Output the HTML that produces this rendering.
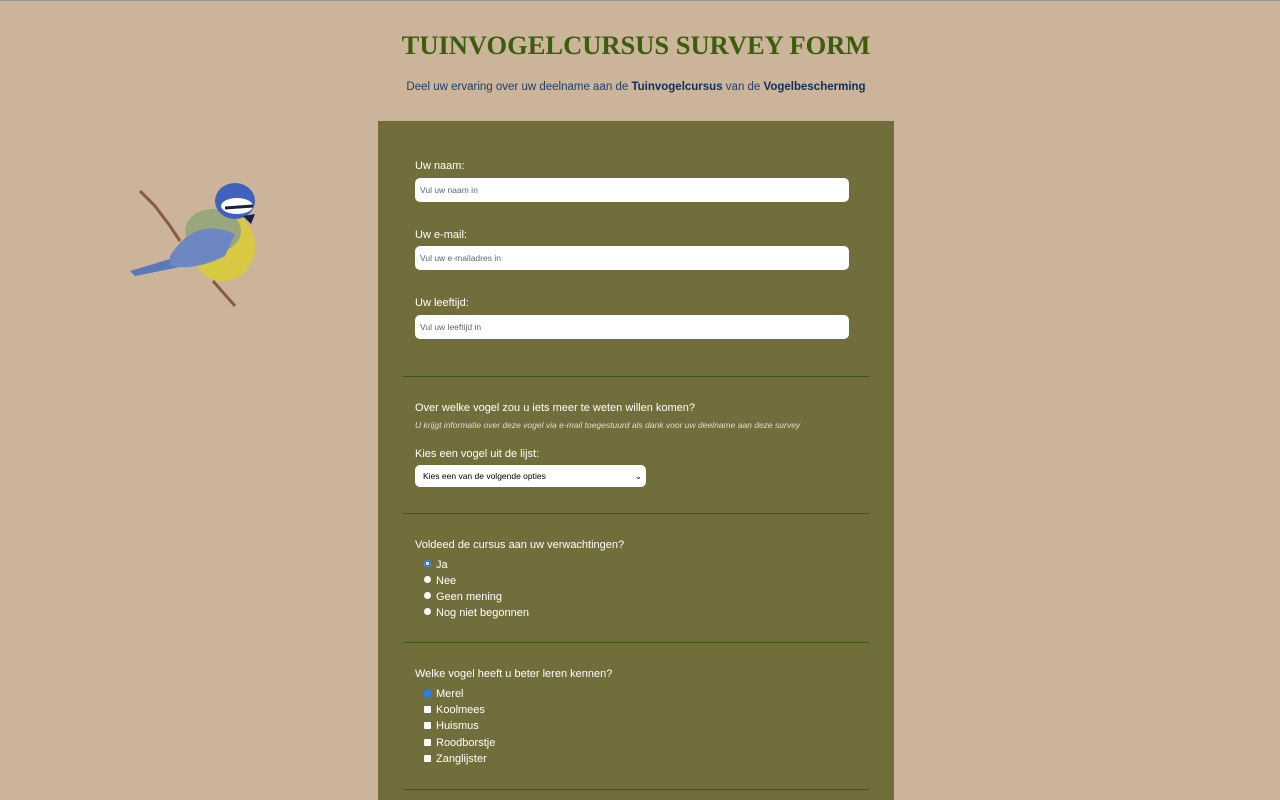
<!DOCTYPE html>
<html><head><meta charset="utf-8"><style>
html,body{margin:0;width:1280px;height:800px;overflow:hidden}
body{background:#cbb499;font-family:"Liberation Sans",sans-serif;position:relative;border-top:1px solid #999;box-sizing:border-box}
.a{position:absolute}
h1{position:absolute;left:0;width:1272px;top:29px;margin:0;text-align:center;font-family:"Liberation Serif",serif;font-weight:bold;font-size:26.5px;color:#3a5e0c}
.sub{left:0;width:1272px;top:80px;text-align:center;font-size:11.5px;color:#1c3f6e}
.sub b{color:#0d2f5e;font-weight:bold}
.panel{left:378px;top:120px;width:516px;height:690px;background:#716e3b}
.lab{font-size:11px;color:#fff}
.inp{left:415px;width:434px;height:24px;background:#fff;border-radius:5px;font-size:8.5px;color:#666;line-height:24px;padding-left:5px;box-sizing:border-box}
.hr{left:403px;width:466px;height:1px;background:#3c5612}
.r{width:7px;height:7px;border-radius:50%;background:#fff;left:424px}
.c{width:7px;height:7px;border-radius:1px;background:#fff;left:424px}
.opt{left:436px;font-size:11px;color:#fff}
</style></head><body>
<h1>TUINVOGELCURSUS SURVEY FORM</h1>
<div class="a sub">Deel uw ervaring over uw deelname aan de <b>Tuinvogelcursus</b> van de <b>Vogelbescherming</b></div>
<svg class="a" style="left:125px;top:175px" width="140" height="140" viewBox="0 0 140 140">
<path d="M15 15 L30 30 L45 50 L55 65" stroke="#8a5a40" stroke-width="3" fill="none"/>
<path d="M88 105 L110 130" stroke="#8a5a40" stroke-width="3" fill="none"/>
<ellipse cx="98" cy="70" rx="32" ry="35" fill="#d8c842"/>
<ellipse cx="88" cy="55" rx="28" ry="22" fill="#9aa77a"/>
<path d="M5 95 L55 80 L60 90 L10 100Z" fill="#5b78b8"/>
<path d="M45 80 Q70 40 110 58 L100 80 Q70 95 45 90Z" fill="#6c87c4"/>
<ellipse cx="110" cy="25" rx="20" ry="18" fill="#3f62c0"/>
<ellipse cx="112" cy="30" rx="16" ry="8" fill="#fff"/>
<path d="M100 32 L128 30" stroke="#1a2040" stroke-width="3"/>
<path d="M118 40 L130 38 L126 48Z" fill="#1a2040"/>
</svg>
<div class="a panel"></div>
<div class="a lab" style="left:415px;top:159px">Uw naam:</div>
<div class="a inp" style="top:177px">Vul uw naam in</div>
<div class="a lab" style="left:415px;top:228px">Uw e-mail:</div>
<div class="a inp" style="top:245px">Vul uw e-mailadres in</div>
<div class="a lab" style="left:415px;top:296px">Uw leeftijd:</div>
<div class="a inp" style="top:314px">Vul uw leeftijd in</div>
<div class="a hr" style="top:375px"></div>
<div class="a lab" style="left:415px;top:401px">Over welke vogel zou u iets meer te weten willen komen?</div>
<div class="a" style="left:415px;top:419px;font-size:8.5px;font-style:italic;color:#ddd">U krijgt informatie over deze vogel via e-mail toegestuurd als dank voor uw deelname aan deze survey</div>
<div class="a lab" style="left:415px;top:447px">Kies een vogel uit de lijst:</div>
<div class="a inp" style="top:464px;width:231px;height:22px;line-height:22px;color:#000;padding-left:8px">Kies een van de volgende opties<span style="position:absolute;right:4px">⌄</span></div>
<div class="a hr" style="top:512px"></div>
<div class="a lab" style="left:415px;top:538px">Voldeed de cursus aan uw verwachtingen?</div>
<div class="a r" style="top:559px;box-shadow:inset 0 0 0 2px #2a7de1"></div><div class="a opt" style="top:558px">Ja</div>
<div class="a r" style="top:575px"></div><div class="a opt" style="top:574px">Nee</div>
<div class="a r" style="top:591px"></div><div class="a opt" style="top:590px">Geen mening</div>
<div class="a r" style="top:607px"></div><div class="a opt" style="top:606px">Nog niet begonnen</div>
<div class="a hr" style="top:641px"></div>
<div class="a lab" style="left:415px;top:667px">Welke vogel heeft u beter leren kennen?</div>
<div class="a c" style="top:689px;background:#2a7de1"></div><div class="a opt" style="top:687px">Merel</div>
<div class="a c" style="top:705px"></div><div class="a opt" style="top:703px">Koolmees</div>
<div class="a c" style="top:721px"></div><div class="a opt" style="top:719px">Huismus</div>
<div class="a c" style="top:738px"></div><div class="a opt" style="top:736px">Roodborstje</div>
<div class="a c" style="top:754px"></div><div class="a opt" style="top:752px">Zanglijster</div>
<div class="a hr" style="top:788px"></div>
</body></html>
